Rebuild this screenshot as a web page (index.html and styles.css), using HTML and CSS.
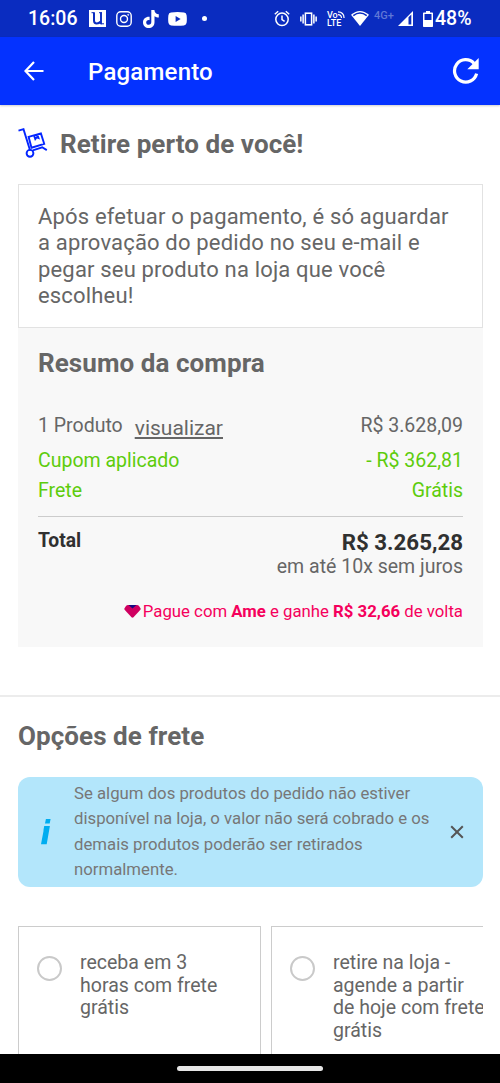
FILE: index.html
```html
<!DOCTYPE html>
<html lang="pt-BR">
<head>
<meta charset="utf-8">
<title>Pagamento</title>
<link rel="stylesheet" href="styles.css">
</head>
<body>
<div class="screen">
  <div class="status">
    <div class="status-left">
      <span class="time">16:06</span>
      <svg class="i-u" width="17" height="17" viewBox="0 0 17 17"><path fill="#fff" d="M0 0h17v17H0z"/><path d="M2.500 2.700h3M10 2.700h3M12 13.800h3" stroke="#0a2cc0" stroke-width="1"/><path d="M5 2.500v8q0 3 2.700 3t3.600-2" fill="none" stroke="#0a2cc0" stroke-width="2"/><path d="M12 2.500v11.800" stroke="#0a2cc0" stroke-width="1.900"/></svg>
      <svg class="i-ig" width="16" height="16" viewBox="0 0 16 16" fill="none" stroke="#fff" stroke-width="1.400"><rect x=".8" y=".8" width="14.400" height="14.400" rx="4"/><circle cx="8" cy="8" r="3.500"/><circle cx="12.200" cy="3.800" r=".6" fill="#fff" stroke-width=".6"/></svg>
      <svg class="i-tt" width="16" height="18" viewBox="0 0 16 18"><path fill="#fff" d="M8.3 0h3.100c.2 2.400 1.700 4.100 4.400 4.300v3.300c-1.600 0-3-.5-4.300-1.400v6c0 3.600-2.700 5.800-5.700 5.800C2.600 18 0 15.500 0 12.400c0-3.600 3-6 6.600-5.600v3.400c-1.900-.5-3.400.6-3.400 2.200 0 1.400 1.100 2.400 2.500 2.400 1.600 0 2.600-1 2.600-2.800z"/></svg>
      <svg class="i-yt" width="19" height="14" viewBox="0 0 19 14"><path fill="#fff" d="M3 .6Q9.500-.4 16 .6q2.300.3 2.600 2.600.5 3.800 0 7.600-.3 2.300-2.600 2.600-6.500.9-13 0Q.7 13.100.4 10.800q-.5-3.800 0-7.600Q.7.900 3 .6z"/><path fill="#0a2cc0" d="M7.600 4v6l5-3z"/></svg>
      <span class="dot"></span>
    </div>
    <div class="status-right">
      <svg class="i-al" width="16" height="17" viewBox="0 0 16 17" fill="none" stroke="#fff" stroke-width="1.500"><circle cx="8" cy="9.300" r="6.200"/><path d="M8 5.500v4l2.600 1.800M.8 4.200L4.200 1.300M15.200 4.200l-3.400-2.900"/></svg>
      <svg class="i-vb" width="17" height="14" viewBox="0 0 18 14" preserveAspectRatio="none" fill="none" stroke="#fff" stroke-width="1.600"><rect x="5.700" y="1.200" width="6.600" height="11.600"/><path d="M3.300 2.500v9M14.700 2.500v9M.9 4.500v5M17.100 4.500v5"/></svg>
      <div class="volte"><span class="vo">Vo<svg width="7" height="7" viewBox="0 0 7 7" fill="none" stroke="#fff" stroke-width="1.200"><path d="M0 .9Q5.800.9 6.100 7M0 3.600Q3.300 3.600 3.500 7"/></svg></span><span>LTE</span></div>
      <svg class="i-wf" width="18" height="15" viewBox="0 0 18 15"><path fill="#fff" d="M0 3.800Q9-3.800 18 3.800L9 15z"/><path d="M2.300 4.700Q9-.6 15.700 4.700" fill="none" stroke="#0a2cc0" stroke-width="1.500"/></svg>
      <span class="net">4G+</span>
      <svg class="i-sg" width="15" height="15" viewBox="0 0 15 15"><path fill="#fff" d="M15 0v15H0z"/><path fill="#0a2cc0" d="M10.500 6.300l2.800-2.800v9.900h-2.800z"/></svg>
      <svg class="i-bt" width="10" height="16" viewBox="0 0 10 16"><path fill="#fff" d="M3 0h4v1.500h2.300q.7 0 .7.700v13.100q0 .7-.7.700H.7q-.7 0-.7-.7V2.200q0-.7.700-.7H3z"/><path fill="#0a2cc0" d="M1.500 3h7v6h-7z"/></svg>
      <span class="pct">48%</span>
    </div>
  </div>
  <header class="bar">
    <svg class="back" width="20" height="20" viewBox="0 0 20 20" fill="none" stroke="#fff" stroke-width="2.200"><path d="M19.500 10H2M10 1L1.500 10 10 19"/></svg>
    <h1>Pagamento</h1>
    <svg class="reload" width="28" height="28" viewBox="0 0 28 28"><path d="M24.600 16.600A11.200 11.200 0 1 1 22 6.300" fill="none" stroke="#fff" stroke-width="3.200"/><path fill="#fff" d="M26.700 1v11.200H15.300z"/></svg>
  </header>
  <main>
    <section class="pickup">
      <h2 class="title"><svg width="30" height="31" viewBox="0 0 30 31" fill="none" stroke="#0426ff" stroke-width="1.900"><path d="M.5 2.600l5-1.400 6.600 21.300M14.800 22.300l9.400-3 4.600 2.800"/><circle cx="12" cy="25.300" r="3.400"/><path d="M10.600 8.800l12.300-3.400 3.300 10.400-12.700 3.900zM16.100 7.700l1.200 3.300 1.300-1.600 1.900.6-1.100-3.300"/></svg><span>Retire perto de você!</span></h2>
      <p class="notice">Após efetuar o pagamento, é só aguardar<br>a aprovação do pedido no seu e-mail e<br>pegar seu produto na loja que você<br>escolheu!</p>
      <div class="summary">
        <h2>Resumo da compra</h2>
        <div class="row r1"><span>1 Produto</span><a class="view">visualizar</a><span class="val">R$ 3.628,09</span></div>
        <div class="row r2"><span>Cupom aplicado</span><span class="val">- R$ 362,81</span></div>
        <div class="row r3"><span>Frete</span><span class="val">Grátis</span></div>
        <div class="total"><b class="label">Total</b><div class="amount"><b>R$ 3.265,28</b><span>em até 10x sem juros</span></div></div>
        <div class="ame"><svg width="17" height="13" viewBox="0 0 17 13"><path fill="#cf0060" d="M4 0h9q1.200 0 2 .9l1.500 2.300q.5.900-.3 1.800L9.500 12.200q-1 .9-2 0L.8 5Q0 4.100.5 3.200L2 .9Q2.800 0 4 0z"/><path fill="#160a82" d="M4.500 0h8L8.500 3.500z"/></svg><span>Pague com <b>Ame</b> e ganhe <b>R$ 32,66</b> de volta</span></div>
      </div>
    </section>
    <section class="shipping">
      <h2>Opções de frete</h2>
      <div class="info">
        <svg class="i-info" width="10" height="26" viewBox="0 0 10 26" fill="#00adf0"><path d="M4.900 0h4.700l-.9 4.600H4zM3.200 7h5.700L5.700 25.200H0L2.600 11.500H2.400z"/></svg>
        <p>Se algum dos produtos do pedido não estiver<br>disponível na loja, o valor não será cobrado e os<br>demais produtos poderão ser retirados<br>normalmente.</p>
        <svg class="close" width="14" height="14" viewBox="0 0 14 14" stroke="#555" stroke-width="2"><path d="M1.200 1.200l11.600 11.600M12.800 1.200L1.200 12.800"/></svg>
      </div>
      <div class="options">
        <div class="option"><i class="radio"></i><p>receba em 3<br>horas com frete<br>grátis</p></div>
        <div class="option"><i class="radio"></i><p>retire na loja -<br>agende a partir<br>de hoje com frete<br>grátis</p></div>
      </div>
    </section>
  </main>
  <div class="nav"><span></span></div>
</div>
</body>
</html>
```
FILE: styles.css
```css
* { box-sizing: border-box; }
body { margin: 0; font-family: Roboto, sans-serif; color: #666; background: #fff; }
h1, h2, p { margin: 0; }
svg { display: block; flex: none; }
.screen { width: 500px; height: 1083px; display: flex; flex-direction: column; overflow: hidden; white-space: nowrap; }
.status { height: 37px; flex: none; background: #0a2cc0; color: #fff; display: flex; justify-content: space-between; }
.status-left, .status-right { display: flex; align-items: center; }
.time { font-size: 19.500px; font-weight: 500; width: 89px; padding-left: 28px; line-height: 39px; }
.i-ig { margin-left: 10px; }
.i-tt { margin-left: 11px; }
.i-yt { margin-left: 9px; }
.dot { width: 5px; height: 5px; border-radius: 50%; background: #fff; margin-left: 15px; }
.i-vb { margin-left: 10px; }
.volte { margin-left: 10px; width: 17px; font-size: 9px; line-height: 8px; font-weight: 500; display: flex; flex-direction: column; }
.vo { display: flex; }
.i-wf { margin-left: 7px; }
.net { font-size: 11px; font-weight: 500; color: #6077d6; margin: -7px 0 0 5px; width: 22px; }
.i-sg { margin-left: 2px; }
.i-bt { margin-left: 10px; }
.pct { font-size: 19.500px; font-weight: 500; width: 67px; padding-left: 2px; line-height: 39px; }
.bar { height: 68px; flex: none; background: #0432ff; color: #fff; display: flex; align-items: center; padding: 0 20px 0 24px; box-shadow: 0 1px 2px #0003; }
.bar h1 { font-size: 24px; letter-spacing: .2px; font-weight: 500; margin: 2px auto 0 44px; }
main { flex: 1; min-height: 0; overflow: hidden; }
h2 { font-size: 26px; letter-spacing: .07px; line-height: 30px; font-weight: 700; color: #666; }
.pickup { height: 592px; padding: 24px 17px 0 18px; border-bottom: 2px solid #ececec; }
.title { display: flex; gap: 12px; height: 31px; }
.title svg { margin-top: -1px; }
.notice { margin-top: 24px; height: 144px; border: 1px solid #e2e2e2; padding: 19px; font-size: 22px; letter-spacing: .17px; line-height: 26.400px; }
.summary { height: 319px; background: #f8f8f8; padding: 20px 20px 0; }
.row { display: flex; font-size: 19.500px; line-height: 30px; }
.val { margin-left: auto; }
.r1 { margin-top: 33px; }
.r2 { margin-top: 3px; }
.r2, .r3 { color: #5dcc0c; }
.view { font-size: 21px; margin: 2px 0 0 12px; text-decoration: underline; text-underline-offset: 2px; }
.total { margin-top: 10px; padding-top: 13px; border-top: 1px solid #ccc; display: flex; justify-content: space-between; }
.label { font-size: 19.300px; line-height: 22px; color: #303030; }
.amount { display: flex; flex-direction: column; align-items: flex-end; font-size: 19.500px; line-height: 24px; }
.amount b { font-size: 22.300px; color: #303030; line-height: 25px; }
.ame { display: flex; align-items: center; justify-content: flex-end; gap: 2px; margin-top: 22px; font-size: 16.750px; line-height: 20px; color: #f5005c; }
.shipping { padding: 24px 17px 0 18px; }
.info { margin-top: 26px; height: 110px; border-radius: 12px; background: #b3e6fb; display: flex; align-items: center; padding: 0 19px 0 23px; }
.info p { margin: -1px auto 0 23px; font-size: 16.750px; line-height: 25.100px; color: #777; }
.options { margin-top: 39px; display: flex; gap: 10px; overflow: hidden; }
.option { flex: none; width: 243px; height: 200px; border: 1px solid #ccc; padding: 25px 18px; display: flex; gap: 18px; font-size: 19.550px; line-height: 22.700px; }
.radio { width: 25px; height: 25px; flex: none; border: 2px solid #c9c9c9; border-radius: 50%; margin-top: 4px; }
.nav { height: 29px; flex: none; background: #000; display: flex; align-items: center; justify-content: center; }
.nav span { width: 146px; height: 5px; border-radius: 3px; background: #e6e6e6; }
```
